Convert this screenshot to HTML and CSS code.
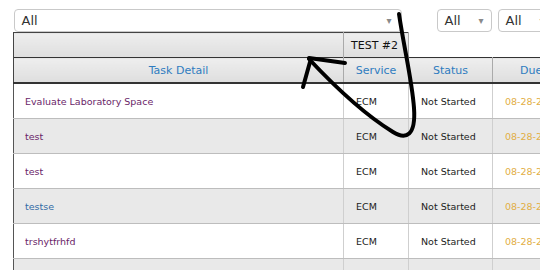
FILE: index.html
```html
<!DOCTYPE html>
<html lang="en">
<head>
  <meta charset="UTF-8">
  <title>Tasks</title>
  <link rel="stylesheet" href="styles.css">
</head>
<body>
  <div class="page">
    <table class="grid">
      <colgroup>
        <col class="c-task">
        <col class="c-service">
        <col class="c-status">
        <col class="c-due">
      </colgroup>
      <thead>
        <tr class="filters">
          <td colspan="2"><div class="select wide">All<span class="caret">▾</span></div></td>
          <td class="right"><div class="select small">All<span class="caret">▾</span></div></td>
          <td><div class="select small">All<span class="caret">▾</span></div></td>
        </tr>
        <tr class="group">
          <th class="blank"></th>
          <th class="test">TEST #2</th>
          <th class="empty"></th>
          <th class="empty"></th>
        </tr>
        <tr class="heads">
          <th>Task Detail</th>
          <th>Service</th>
          <th>Status</th>
          <th class="left">Due Date</th>
        </tr>
      </thead>
      <tbody>
        <tr><td><a class="visited" href="#">Evaluate Laboratory Space</a></td><td>ECM</td><td>Not Started</td><td class="due">08-28-2014</td></tr>
        <tr><td><a class="visited" href="#">test</a></td><td>ECM</td><td>Not Started</td><td class="due">08-28-2014</td></tr>
        <tr><td><a class="visited" href="#">test</a></td><td>ECM</td><td>Not Started</td><td class="due">08-28-2014</td></tr>
        <tr><td><a class="fresh" href="#">testse</a></td><td>ECM</td><td>Not Started</td><td class="due">08-28-2014</td></tr>
        <tr><td><a class="visited" href="#">trshytfrhfd</a></td><td>ECM</td><td>Not Started</td><td class="due">08-28-2014</td></tr>
        <tr><td><a class="visited" href="#">review</a></td><td>ECM</td><td>Not Started</td><td class="due">08-28-2014</td></tr>
      </tbody>
    </table>

    <!-- hand drawn annotation on top of the grid -->
    <svg class="scribble" width="540" height="270" viewBox="0 0 540 270">
      <path d="M399,14 C404,48 412,80 414,108 C416,136 406,140 393,132 C367,116 338,90 309,59" />
      <path d="M309,58 L345,63" />
      <path d="M310,62 L303,87" />
    </svg>
  </div>
</body>
</html>
```

FILE: styles.css
```css
html, body { margin: 0; padding: 0; background: #fff; overflow: hidden; }
body { font-family: "DejaVu Sans", Verdana, sans-serif; }
.page { position: relative; width: 540px; height: 270px; overflow: hidden; }

.grid { border-collapse: collapse; table-layout: fixed; width: 640px; margin-left: 13px; }
.c-task { width: 330px; }
.c-service { width: 65px; }
.c-status { width: 84px; }
.c-due { width: 161px; }

/* filter row */
.filters td { padding: 9px 0 0 0; height: 23px; border: none; vertical-align: top; }
.filters td.right { text-align: right; }
.select { box-sizing: border-box; height: 23px; border: 1px solid #c9c9c9; border-radius: 4px; background: #fff; color: #333; font-size: 13px; line-height: 21px; padding-left: 7px; position: relative; text-align: left; }
.select.wide { width: 388px; margin-left: 0; }
.select.small { width: 55px; display: inline-block; margin-left: 5px; }
.filters td.right .select.small { margin-left: 0; margin-right: 1px; }
.caret { position: absolute; right: 7px; top: 0; font-size: 10px; color: #8a8a8a; }
.select.wide .caret { right: 9px; }

/* header rows */
th { font-weight: normal; font-size: 11px; height: 24px; padding: 0; background: linear-gradient(#eeeeee, #dedede); }
.group th.blank { border-top: 1px solid #444; border-left: 1px solid #444; border-right: 1px solid #aaa; }
.group th.test { border-top: 1px solid #444; border-right: 1px solid #aaa; color: #111; text-align: left; padding-left: 7px; }
.group th.empty { background: #fff; border: none; }
.heads th { color: #2f7cc0; border-top: 1px solid #333; border-bottom: 2px solid #333; border-right: 1px solid #aaa; text-align: center; }
.heads th:first-child { border-left: 1px solid #444; }
.heads th.left { text-align: left; padding-left: 27px; }

/* body rows */
td { font-size: 9.5px; color: #222; height: 34px; padding: 0 0 0 12px; border-right: 1px solid #cfcfcf; border-bottom: 1px solid #bdbdbd; white-space: nowrap; overflow: hidden; }
tbody td:first-child { border-left: 1px solid #555; padding-left: 11px; }
tbody tr:nth-child(even) td { background: #e9e9e9; }
a { text-decoration: none; }
a.visited { color: #6a2568; }
a.fresh { color: #336ba6; }
td.due { color: #e2ae45; }

.scribble { position: absolute; left: 0; top: 0; pointer-events: none; }
.scribble path { fill: none; stroke: #000; stroke-width: 4; stroke-linecap: round; stroke-linejoin: round; }
```
